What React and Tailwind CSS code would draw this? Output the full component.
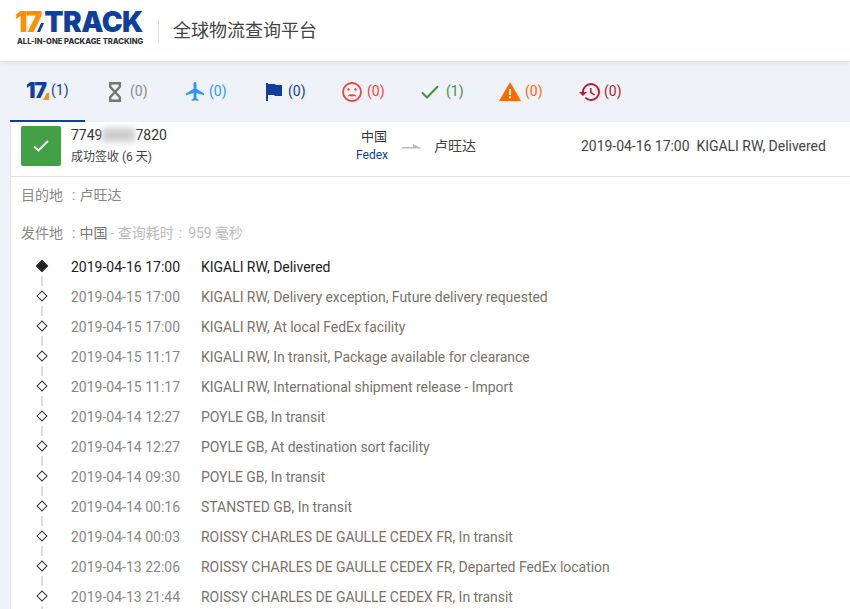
import React from 'react';
import { MdFlight, MdHistory } from 'react-icons/md';

const tabs = [
  { key: 'all', count: 1, color: 'text-[#0f3f9c]', box: 'pl-[16px]' },
  { key: 'wait', count: 0, color: 'text-[#8a8a8a]', box: 'pl-[19px]' },
  { key: 'transit', count: 0, color: 'text-[#2f96f3]', box: 'pl-[16px]' },
  { key: 'pickup', count: 0, color: 'text-[#0f3f9c]', box: 'pl-[19px]' },
  { key: 'fail', count: 0, color: 'text-[#f44336]', box: 'pl-[16px]' },
  { key: 'done', count: 1, color: 'text-[#4b8f3c]', box: 'pl-[16px]' },
  { key: 'alert', count: 0, color: 'text-[#ff6a00]', box: 'pl-[15px]' },
  { key: 'expired', count: 0, color: 'text-[#b71c2c]', box: 'pl-[15px]' },
];

const events = [
  ['2019-04-16 17:00', 'KIGALI RW, Delivered'],
  ['2019-04-15 17:00', 'KIGALI RW, Delivery exception, Future delivery requested'],
  ['2019-04-15 17:00', 'KIGALI RW, At local FedEx facility'],
  ['2019-04-15 11:17', 'KIGALI RW, In transit, Package available for clearance'],
  ['2019-04-15 11:17', 'KIGALI RW, International shipment release - Import'],
  ['2019-04-14 12:27', 'POYLE GB, In transit'],
  ['2019-04-14 12:27', 'POYLE GB, At destination sort facility'],
  ['2019-04-14 09:30', 'POYLE GB, In transit'],
  ['2019-04-14 00:16', 'STANSTED GB, In transit'],
  ['2019-04-14 00:03', 'ROISSY CHARLES DE GAULLE CEDEX FR, In transit'],
  ['2019-04-13 22:06', 'ROISSY CHARLES DE GAULLE CEDEX FR, Departed FedEx location'],
  ['2019-04-13 21:44', 'ROISSY CHARLES DE GAULLE CEDEX FR, In transit'],
];

const TabIcon = ({ name }) => {
  if (name === 'all')
    return (
      <span className="relative flex h-[20px] w-[23px] items-center font-['Inter',sans-serif] text-[21px] leading-none font-black tracking-[-1px] text-[#0f3f9c]">
        17
        <svg className="absolute right-0 bottom-[1px]" width="6" height="7" viewBox="0 0 6 7" fill="#ff8f00">
          <path d="M3.5 0H6v7H0z" />
        </svg>
      </span>
    );
  if (name === 'wait')
    return (
      <svg width="14" height="20" viewBox="0 0 14 20" fill="none" stroke="#757575" strokeWidth="2.4">
        <path d="M1 1.2h12M1 18.8h12M2.2 1.2v3.6L7 10l4.8-5.2V1.2M2.2 18.8v-3.6L7 10l4.8 5.2v3.6" />
      </svg>
    );
  if (name === 'transit') return <MdFlight className="text-[#2f96f3]" size={23} />;
  if (name === 'pickup')
    return (
      <svg width="16" height="18" viewBox="0 0 16 18" fill="#0f3f9c">
        <path d="M0 0h2v18H0zM2 1h7l1 1h6v11H9l-1-1H2z" />
      </svg>
    );
  if (name === 'fail')
    return (
      <svg width="20" height="20" viewBox="0 0 20 20" fill="none" stroke="#f44336" strokeWidth="1.8">
        <circle cx="10" cy="10" r="9" />
        <circle cx="6.5" cy="7.5" r="1.2" fill="#f44336" stroke="none" />
        <circle cx="13.5" cy="7.5" r="1.2" fill="#f44336" stroke="none" />
        <path d="M5.5 14.2c1-2.6 8-2.6 9 0z" fill="#f44336" stroke="none" />
      </svg>
    );
  if (name === 'done')
    return (
      <svg width="18" height="14" viewBox="0 0 18 14" fill="none" stroke="#4b8f3c" strokeWidth="2">
        <path d="M1 7.5l5 5L17 1.2" />
      </svg>
    );
  if (name === 'alert')
    return (
      <svg width="22" height="19" viewBox="0 0 22 19">
        <path d="M11 0l11 19H0z" fill="#ff6a00" />
        <path d="M10 7h2v6h-2zM10 14.2h2v2h-2z" fill="#fff" />
      </svg>
    );
  return <MdHistory className="text-[#b71c2c]" size={24} />;
};

const App = () => {
  return (
    <div className="h-[609px] w-[850px] overflow-hidden bg-[#eff2f9] font-['Roboto','Noto_Sans_CJK_SC',sans-serif] text-[14px]">
      {/* top bar */}
      <div className="relative z-10 flex h-[61px] items-center bg-white pl-[15px] shadow-[0_1px_4px_rgba(0,0,0,0.1)]">
        <div className="w-[128px] self-start pt-[8px]">
          <div className="flex h-[28px] items-center font-['Inter',sans-serif] text-[28px] leading-[28px] font-black">
            <span className="tracking-[-2px] text-[#ff8f00]">17</span>
            <svg className="mb-[4px] ml-[-3px] self-end" width="7" height="9" viewBox="0 0 7 9" fill="#0f3f9c">
              <path d="M4 0h3L3 9H0z" />
            </svg>
            <span className="tracking-[-0.5px] text-[#0f3f9c]">TRACK</span>
          </div>
          <div className="mt-[2px] ml-[2px] font-['Inter',sans-serif] text-[7.6px] leading-[8px] font-extrabold whitespace-nowrap text-[#333]">
            ALL-IN-ONE PACKAGE TRACKING
          </div>
        </div>
        <div className="mr-[14px] ml-[15px] h-[22px] w-px bg-[#ddd]" />
        <div className="text-[18px] text-[#444]">全球物流查询平台</div>
      </div>

      {/* status tabs */}
      <div className="flex h-[61px] gap-1 pl-[10px]">
        {tabs.map((t, i) => (
          <div
            key={t.key}
            className={`flex h-full w-[75px] items-center ${i === 0 ? 'border-b-2 border-[#0f3f9c]' : ''} ${t.color}`}
          >
            <div className={`flex w-[41px] shrink-0 items-center ${t.box}`}>
              <TabIcon name={t.key} />
            </div>
            <span>({t.count})</span>
          </div>
        ))}
      </div>

      {/* result panel */}
      <div className="ml-[10px] h-full border-l border-[#e2e2e2] bg-white">
        <div className="flex h-[55px] border-b border-[#e0e0e0] pt-[4px] pl-[10px]">
          <div className="flex h-[40px] w-[40px] items-center justify-center rounded-[2px] bg-[#43a047]">
            <svg width="16" height="12" viewBox="0 0 16 12" fill="none" stroke="#fff" strokeWidth="1.8">
              <path d="M1 6.5l4.5 4L15 1" />
            </svg>
          </div>
          <div className="ml-[10px] w-[230px]">
            <div className="flex h-[18px] items-center text-[#333]">
              7749
              <span className="h-[14px] w-[33px] bg-[#cdcdcd] blur-[3px]" />
              7820
            </div>
            <div className="mt-[4px] text-[12px] text-[#444]">成功签收 (6 天)</div>
          </div>
          <div className="ml-[35px] w-[76px] pt-[1px] text-center">
            <div className="text-[13px] leading-[20px] text-[#333]">中国</div>
            <div className="pr-[4px] text-[12px] leading-[17px] text-[#0f3f9c]">Fedex</div>
          </div>
          <svg className="mt-[18px] ml-[-10px]" width="20" height="6" viewBox="0 0 20 6" fill="#bbb">
            <path d="M0 3h11V0l9 4.5H0z" />
          </svg>
          <div className="ml-[12px] w-[147px] pt-[10px] text-[14px] leading-[20px] text-[#444]">卢旺达</div>
          <div className="whitespace-nowrap pt-[10px] leading-[20px] tracking-[-0.03px] text-[#444]">2019-04-16 17:00&nbsp;&nbsp;KIGALI RW, Delivered</div>
        </div>

        <div className="pl-[10px] text-[#888]">
          <div className="mt-[9px] flex h-[18px] items-center">
            目的地<span className="mr-[4px] ml-[9px]">:</span>卢旺达
          </div>
          <div className="mt-[20px] flex h-[18px] items-center">
            发件地<span className="mr-[4px] ml-[9px]">:</span>
            <span className="text-[#777]">中国</span>
            <span className="ml-[3px] text-[#bbb]">- 查询耗时</span>
            <span className="mr-[6px] ml-[5px] text-[#bbb]">:</span>
            <span className="mr-[3px] text-[#bbb]">959</span>
            <span className="text-[#bbb]">毫秒</span>
          </div>
        </div>

        <div className="mt-[10px] pl-[27px]">
          {events.map(([time, desc], i) => (
            <div key={i} className="relative flex h-[30px] items-center">
              <span
                className={`mb-[2px] h-[8px] w-[8px] rotate-45 border border-[#333] ${i === 0 ? 'scale-110 bg-[#222]' : 'bg-white'}`}
              />
              <span className="absolute top-[24px] left-[3px] h-[10px] w-[2px] bg-[#ddd]" />
              <span className={`ml-[25px] w-[130px] whitespace-nowrap ${i === 0 ? 'text-[#222]' : 'text-[#888]'}`}>{time}</span>
              <span className={`whitespace-nowrap tracking-[-0.03px] ${i === 0 ? 'text-[#222]' : 'text-[#7b7268]'}`}>{desc}</span>
            </div>
          ))}
        </div>
      </div>
    </div>
  );
};

export default App;
